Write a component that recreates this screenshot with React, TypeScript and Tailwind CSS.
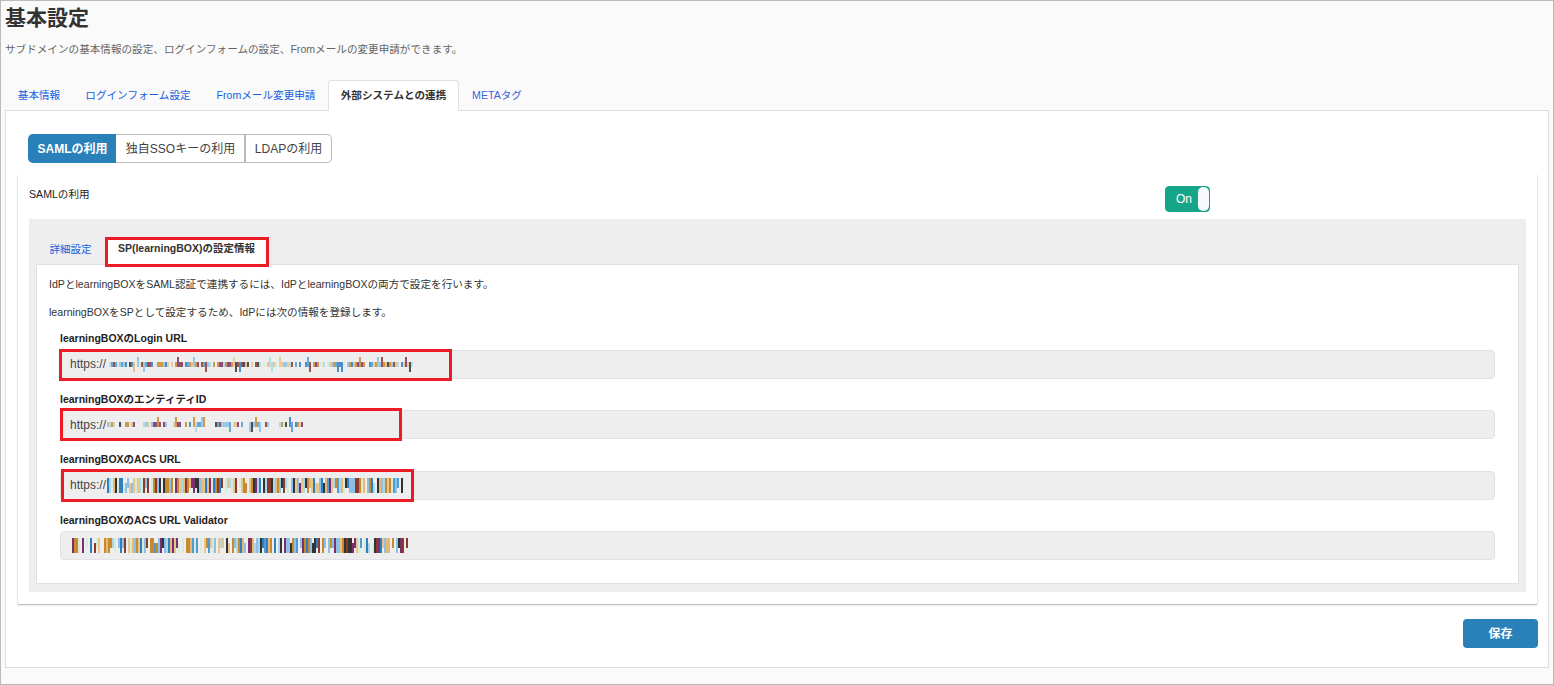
import React from 'react';

const font = { fontFamily: '"Liberation Sans", "Noto Sans CJK JP", sans-serif' };

const palette = ['#2f7fc1', '#c98a2e', '#7a2f6f', '#333333', '#e6c68c', '#8cc0e6', '#a8d8ea', '#8a3a2f', '#4f9bd6', '#e8b878', '#d8ead8', '#c98a2e', '#8cc0e6'];

// scrambled part of the urls, drawn as a strip of coloured columns
const Scramble: React.FC<{ width: number; seed: number; density: number; tall?: boolean }> = ({ width, seed, density, tall }) => {
  const rects: React.ReactNode[] = [];
  let s = seed;
  const next = () => {
    s = (s * 16807) % 2147483647;
    return (s % 1000) / 1000;
  };
  for (let x = 0; x < width; x += 2) {
    const c = palette[Math.floor(next() * palette.length)];
    if (tall) {
      if (next() < density) {
        const top = next() < 0.12 ? 5 : 0;
        const h = next() < 0.2 ? 10 : 15;
        rects.push(<rect key={x} x={x} y={top} width={2} height={Math.min(h, 15 - top)} fill={c} />);
      }
    } else if (next() < density) {
      const tallBar = next() < 0.15;
      rects.push(<rect key={x} x={x} y={tallBar ? (next() < 0.5 ? 0 : 5) : 5} width={2} height={tallBar ? 10 : 5} fill={c} opacity={0.85} />);
    }
  }
  return (
    <svg width={width} height={15} className="block shrink-0">
      {rects}
    </svg>
  );
};

const UrlField: React.FC<{ label: string; prefix?: boolean; width: number; seed: number; density: number; tall?: boolean }> = ({ label, prefix = true, width, seed, density, tall }) => (
  <div className="h-[60.5px]">
    <label className="block h-[21px] pt-[1.5px] text-[10.5px] leading-[16px] font-bold text-[#222]">{label}</label>
    <div className="flex h-[29px] items-center rounded-[4px] border border-[#e2e2e6] bg-[#eeeeee] pl-[9px] text-[12px] text-[#444]">
      {prefix ? <span className="mr-[1px]">https://</span> : <span className="w-[2px]" />}
      <Scramble width={width} seed={seed} density={density} tall={tall} />
    </div>
  </div>
);

const Highlight: React.FC<{ className: string }> = ({ className }) => (
  <div className={'pointer-events-none absolute z-20 border-[3px] border-[#ed1c24] ' + className} />
);

export default function App() {
  return (
    <div style={font} className="relative h-[685px] w-[1554px] overflow-hidden border border-[#bbbbbb] bg-[#fafafa] text-[#333]">
      <div className="pl-[4px] pr-[4px]">
        <h1 className="h-[40px] pt-[4px] text-[21px] leading-[26px] font-bold text-[#333]">基本設定</h1>
        <p className="h-[39px] text-[10.6px] leading-[16px] text-[#666]">サブドメインの基本情報の設定、ログインフォームの設定、Fromメールの変更申請ができます。</p>

        <div className="flex h-[30px] items-end pl-[1px] text-[10.6px]">
          <a className="flex h-[30px] w-[66px] items-center justify-center pt-[1px] text-[#1560e0]">基本情報</a>
          <a className="flex h-[30px] w-[132px] items-center justify-center pt-[1px] text-[#1560e0]">ログインフォーム設定</a>
          <a className="flex h-[30px] w-[124px] items-center justify-center pt-[1px] text-[#1560e0]">Fromメール変更申請</a>
          <a className="relative z-10 -mb-px flex h-[31px] w-[131px] items-center justify-center rounded-t-[4px] border border-b-0 border-[#e0e0e6] bg-white font-bold text-[#333]">外部システムとの連携</a>
          <a className="flex h-[30px] w-[76px] items-center justify-center pt-[1px] text-[#3a5fe0]">METAタグ</a>
        </div>

        <div className="h-[558px] border border-[#dddde2] bg-white pl-[11px] pr-[10px]">
          <div className="flex pt-[23px] pl-[11px] text-[12px]">
            <button className="h-[29px] w-[88px] rounded-l-[5px] bg-[#2a80b9] pl-[1px] font-bold text-white">SAMLの利用</button>
            <button className="h-[29px] w-[130px] border border-r-2 border-l-0 border-[#bbbbbb] pl-[1px] text-[#444]">独自SSOキーの利用</button>
            <button className="h-[29px] w-[86px] rounded-r-[5px] border border-l-0 border-[#bbbbbb] text-[#444]">LDAPの利用</button>
          </div>

          <div className="mt-[12px] h-[430px] rounded-b-[2px] border-x border-b border-x-[#e6e6e6] border-b-[#bdbdbd] bg-white pl-[11px] pr-[11px] shadow-[0_1px_2px_rgba(0,0,0,0.08)]">
            <div className="flex h-[44px] items-start justify-between">
              <span className="pt-[11px] text-[10.6px] leading-[16px] text-[#222]">SAMLの利用</span>
              <div className="mt-[11px] mr-[316px] flex h-[26px] w-[45px] items-center justify-between rounded-[4px] border border-[#17a589] bg-[#17a589] pl-[10px] text-[12px] text-white">
                <span>On</span>
                <span className="h-[24px] w-[11px] rounded-[5px] bg-[#f6f8fb]" />
              </div>
            </div>

            <div className="h-[373px] bg-[#eeeeee] pl-[7px] pr-[7px]">
              <div className="flex h-[45px] items-end text-[10.5px]">
                <a className="flex h-[26px] w-[69px] items-center justify-center pb-[2px] text-[#1560e0]">詳細設定</a>
                <a className="relative z-10 -mb-px flex h-[27px] w-[162px] items-center justify-center rounded-t-[4px] bg-white pb-[5px] pl-[1px] font-bold text-[#333]">SP(learningBOX)の設定情報</a>
              </div>
              <div className="h-[320px] border border-[#dfdfe6] bg-white pl-[11px] pr-[23px]">
                <p className="h-[27px] pt-[11px] pl-[1px] text-[10.6px] leading-[16px] text-[#333]">IdPとlearningBOXをSAML認証で連携するには、IdPとlearningBOXの両方で設定を行います。</p>
                <p className="mt-[1px] h-[27px] pt-[11px] pl-[1px] text-[10.6px] leading-[16px] text-[#333]">learningBOXをSPとして設定するため、IdPには次の情報を登録します。</p>
                <div className="pl-[12px] pt-[8.75px]">
                  <UrlField label="learningBOXのLogin URL" width={306} seed={17} density={0.8} />
                  <UrlField label="learningBOXのエンティティID" width={196} seed={91} density={0.7} />
                  <UrlField label="learningBOXのACS URL" width={296} seed={233} density={0.88} tall />
                  <UrlField label="learningBOXのACS URL Validator" prefix={false} width={336} seed={517} density={0.88} tall />
                </div>
              </div>
            </div>
          </div>

          <div className="mt-[14px] flex justify-end">
            <button className="h-[29px] w-[75px] rounded-[4px] bg-[#2a80b9] text-[12px] font-bold text-white">保存</button>
          </div>
        </div>
      </div>

      <Highlight className="left-[104px] top-[236px] h-[30px] w-[164px]" />
      <Highlight className="left-[58px] top-[348px] h-[32px] w-[393px]" />
      <Highlight className="left-[59px] top-[407px] h-[33px] w-[342px]" />
      <Highlight className="left-[60px] top-[468px] h-[33px] w-[353px]" />
    </div>
  );
}
